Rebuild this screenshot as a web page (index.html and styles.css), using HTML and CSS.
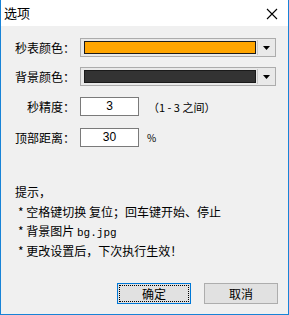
FILE: index.html
```html
<!DOCTYPE html>
<html>
<head>
<meta charset="utf-8">
<link rel="stylesheet" href="styles.css">
</head>
<body>
<div class="window">
  <div class="titlebar">
    <span class="title">选项</span>
    <svg class="close" width="12" height="12" viewBox="0 0 12 12"><path d="M1 1L11 11M11 1L1 11" stroke="#000" stroke-width="1.1"/></svg>
  </div>
  <div class="content">
    <div class="row row-color">
      <span class="label">秒表颜色：</span>
      <div class="combo">
        <div class="swatch swatch-orange"></div>
        <div class="drop"><svg width="7" height="4" viewBox="0 0 7 4"><path d="M0 0H7L3.5 4Z" fill="#000"/></svg></div>
      </div>
    </div>
    <div class="row row-color row-second">
      <span class="label">背景颜色：</span>
      <div class="combo">
        <div class="swatch swatch-dark"></div>
        <div class="drop"><svg width="7" height="4" viewBox="0 0 7 4"><path d="M0 0H7L3.5 4Z" fill="#000"/></svg></div>
      </div>
    </div>
    <div class="row row-field row-third">
      <span class="label label-short">秒精度：</span>
      <div class="field">3</div>
      <span class="hint">（1 - 3 之间）</span>
    </div>
    <div class="row row-field row-fourth">
      <span class="label">顶部距离：</span>
      <div class="field">30</div>
      <span class="pct">%</span>
    </div>
    <div class="notes">
      <div class="note-head">提示，</div>
      <div class="note">* 空格键切换 复位；回车键开始、停止</div>
      <div class="note">* 背景图片 <span class="mono">bg.jpg</span></div>
      <div class="note">* 更改设置后，下次执行生效！</div>
    </div>
    <div class="buttons">
      <div class="btn btn-default"><span class="focus">确定</span></div>
      <div class="btn">取消</div>
    </div>
  </div>
</div>
</body>
</html>
```
FILE: styles.css
```css
html, body {
  margin: 0;
  padding: 0;
}
body {
  width: 289px;
  height: 315px;
  overflow: hidden;
  font-family: "Noto Sans CJK SC", "DejaVu Sans", sans-serif;
  font-size: 12px;
  color: #000;
}
.window {
  width: 289px;
  height: 315px;
  box-sizing: border-box;
  border: 1px solid #1883d7;
  border-top: none;
  background: #f0f0f0;
  display: flex;
  flex-direction: column;
}
.titlebar {
  height: 26px;
  background: #fff;
  display: flex;
  align-items: center;
  justify-content: space-between;
  padding: 0 10px 0 3px;
  flex: none;
}
.title {
  font-size: 13px;
  line-height: 16px;
}
.close {
  display: block;
  margin-top: 1px;
}
.content {
  display: flex;
  flex-direction: column;
  padding: 0 0 0 14px;
  flex: 1;
}
.row {
  display: flex;
  align-items: center;
  height: 19px;
}
.row-color { margin-top: 12px; }
.row-second { margin-top: 10px; }
.row-third { margin-top: 11px; }
.row-fourth { margin-top: 12px; }
.label {
  width: 65px;
  line-height: 19px;
  white-space: nowrap;
}
.label-short {
  width: 53px;
  padding-left: 12px;
}
.combo {
  width: 196px;
  height: 19px;
  box-sizing: border-box;
  border: 1px solid #acacac;
  background: #e9e9e9;
  display: flex;
  align-items: center;
  padding: 2px 0 2px 3px;
}
.swatch {
  flex: 1;
  height: 13px;
  box-sizing: border-box;
  border: 1px solid #1a1a1a;
}
.swatch-orange { background: #ffa500; }
.swatch-dark { background: #333333; }
.drop {
  width: 17px;
  height: 15px;
  margin-left: 1px;
  border-left: 1px solid #c8c8c8;
  display: flex;
  align-items: center;
  justify-content: center;
}
.drop svg { display: block; }
.field {
  width: 59px;
  height: 19px;
  box-sizing: border-box;
  border: 1px solid #7a7a7a;
  background: #fff;
  text-align: center;
  line-height: 17px;
  font-family: "Liberation Sans", sans-serif;
  font-size: 12px;
}
.hint {
  margin-left: 9px;
  font-size: 11px;
}
.pct {
  margin-left: 8px;
  font-size: 10px;
}
.notes {
  margin-top: 36px;
  display: flex;
  flex-direction: column;
}
.note-head {
  line-height: 18px;
  margin-bottom: 2px;
}
.note {
  line-height: 18.5px;
  padding-left: 3px;
}
.mono {
  font-family: "Liberation Mono", monospace;
  font-size: 11px;
}
.buttons {
  margin-top: auto;
  margin-bottom: 10px;
  display: flex;
  justify-content: flex-end;
  gap: 13px;
  padding-right: 10px;
}
.btn {
  width: 74px;
  height: 21px;
  box-sizing: border-box;
  border: 1px solid #adadad;
  background: #e1e1e1;
  display: flex;
  align-items: center;
  justify-content: center;
}
.btn-default {
  border: 1px solid #0078d7;
  padding: 1px;
}
.focus {
  flex: 1;
  align-self: stretch;
  border: 1px dotted #000;
  display: flex;
  align-items: center;
  justify-content: center;
}
```
